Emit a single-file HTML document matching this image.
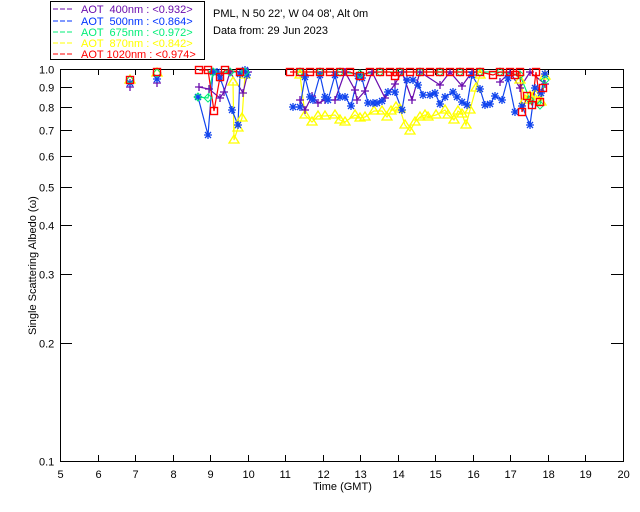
<!DOCTYPE html>
<html><head><meta charset="utf-8"><style>
html,body{margin:0;padding:0;background:#fff;width:640px;height:512px;overflow:hidden}
svg{display:block;font-family:"Liberation Sans",sans-serif;font-size:11px}
</style></head><body>
<svg id="s" width="640" height="512" viewBox="0 0 640 512">
<rect x="50.5" y="1.5" width="154" height="58" fill="#fff" stroke="#000"/>
<g font-size="11">
<line x1="53" y1="9" x2="74" y2="9" stroke="#6a0dad" stroke-dasharray="5,2"/><text x="81" y="13" fill="#6a0dad" xml:space="preserve">AOT  400nm : &lt;0.932&gt;</text>
<line x1="53" y1="21" x2="74" y2="21" stroke="#0033ff" stroke-dasharray="5,2"/><text x="81" y="25" fill="#0033ff" xml:space="preserve">AOT  500nm : &lt;0.864&gt;</text>
<line x1="53" y1="32" x2="74" y2="32" stroke="#00ee77" stroke-dasharray="5,2"/><text x="81" y="36" fill="#00ee77" xml:space="preserve">AOT  675nm : &lt;0.972&gt;</text>
<line x1="53" y1="43" x2="74" y2="43" stroke="#ffff00" stroke-dasharray="5,2"/><text x="81" y="47" fill="#ffff00" xml:space="preserve">AOT  870nm : &lt;0.842&gt;</text>
<line x1="53" y1="54" x2="74" y2="54" stroke="#ff0000" stroke-dasharray="5,2"/><text x="81" y="58" fill="#ff0000" xml:space="preserve">AOT 1020nm : &lt;0.974&gt;</text>
</g>
<text x="213" y="17">PML, N 50 22', W 04 08', Alt 0m</text>
<text x="213" y="34">Data from: 29 Jun 2023</text>
<g id="ax" stroke="#000" fill="none"></g>
<g id="dat"></g>
<g id="lab" font-size="11"></g>
<text x="313" y="490" font-size="11">Time (GMT)</text>
<text transform="translate(36,335) rotate(-90)" font-size="11">Single Scattering Albedo (ω)</text>
</svg>
<script>
var NS="http://www.w3.org/2000/svg";
function el(p,t,a,txt){var e=document.createElementNS(NS,t);for(var k in a)e.setAttribute(k,a[k]);if(txt!=null)e.textContent=txt;p.appendChild(e);return e;}
var ax=document.getElementById('ax'),lab=document.getElementById('lab'),dat=document.getElementById('dat');
var L=60,R=623,T=69,B=461;
el(ax,'rect',{x:L+.5,y:T+.5,width:R-L,height:B-T});
for(var h=5;h<=20;h++){var x=Math.round(L+(h-5)*(R-L)/15)+.5;
 if(h>5&&h<20){el(ax,'line',{x1:x,y1:B,x2:x,y2:B-6});el(ax,'line',{x1:x,y1:T,x2:x,y2:T+6});}
 el(lab,'text',{x:x-(h>=10?6:3),y:B+17},h);}
var vs=[0.1,0.2,0.3,0.4,0.5,0.6,0.7,0.8,0.9,1.0];
vs.forEach(function(v){var y=Math.round(B-(Math.log10(v)+1)*(B-T))+.5;
 if(v>0.1&&v<1){el(ax,'line',{x1:L,y1:y,x2:L+12,y2:y});el(ax,'line',{x1:R,y1:y,x2:R-12,y2:y});}
 el(lab,'text',{x:39,y:y+4},v.toFixed(1));});
function P(s){var a=s.trim().split(/\s+/).map(Number),r=[];for(var i=0;i<a.length;i+=2)r.push([a[i],a[i+1]]);return r;}
var blue=P("130 83 157 79 198 97 208 135 213 72 217 72 220 78 232 110 238 125 240 74 245 70 247 75 293 107 300 107 305 77 310 97 313 100 320 75 325 97 328 100 335 75 340 97 345 97 351 106 358 76 362 78 368 103 373 103 377 103 382 101 388 92 395 92 402 110 407 80 413 80 418 85 423 95 430 95 435 93 440 104 445 97 453 92 457 97 462 102 467 105 472 75 480 89 485 105 490 104 495 96 502 100 508 78 515 112 522 106 530 125 535 88 541 93 545 74");
var yel=P("130 80 157 73 233 82 234 140 238 128 242 118 245 75 300 75 305 115 312 122 318 116 325 116 335 115 340 120 345 122 355 115 360 118 365 117 374 111 382 111 387 117 391 111 396 107 400 109 405 125 410 131 415 122 420 117 425 115 428 117 436 115 445 110 448 115 454 120 458 111 462 114 466 125 470 110 476 88 480 75 520 80 525 100 530 96 535 94 541 102 545 76");
var pur=P("130 87 157 83 199 87 209 89 220 98 224 92 230 72 243 93 248 72 300 100 305 110 312 96 318 103 325 100 335 100 345 72 355 90 357 100 365 91 372 72 385 98 395 84 402 72 412 100 420 72 440 85 450 72 462 86 472 72 500 82 510 72 520 88 530 72 545 84");
var red=P("130 80 157 72 199 70 208 70 214 111 220 77 225 70 240 72 290 72 300 72 310 72 320 72 330 72 340 72 350 72 360 76 370 72 380 72 390 72 395 76 400 72 410 72 420 72 430 72 440 72 450 72 460 72 470 72 480 72 493 75 500 72 510 72 515 75 520 72 522 112 527 96 532 105 536 72 540 102 543 88");
var grn=P("130 80 157 73 198 97 208 98 213 72 230 72 245 72 300 72 320 72 340 72 360 74 380 72 400 72 420 72 440 72 460 72 480 72 500 72 520 75 530 100 540 105 545 80");
function line(d,c){var seg=[d[0]];for(var i=1;i<=d.length;i++){if(i==d.length||d[i][0]-d[i-1][0]>20){if(seg.length>1)el(dat,'polyline',{points:seg.map(function(p){return p.join(',')}).join(' '),fill:'none',stroke:c,'stroke-width':1.2});if(i<d.length)seg=[d[i]];}else seg.push(d[i]);}}
function mk(d,c,t){d.forEach(function(p){var x=p[0],y=p[1];
 if(t=='s')el(dat,'rect',{x:x-3.5,y:y-3.5,width:7,height:7,fill:'none',stroke:c,'stroke-width':1.4});
 else if(t=='d')el(dat,'path',{d:'M'+x+' '+(y-4)+'l4 4l-4 4l-4-4z',fill:'none',stroke:c});
 else if(t=='t')el(dat,'path',{d:'M'+x+' '+(y-5)+'l5 8h-10z',fill:'none',stroke:c,'stroke-width':1.3});
 else if(t=='p')el(dat,'path',{d:'M'+(x-4)+' '+y+'h8M'+x+' '+(y-4)+'v8',stroke:c,'stroke-width':1.3});
 else el(dat,'path',{d:'M'+(x-4)+' '+y+'h8M'+x+' '+(y-4)+'v8M'+(x-3)+' '+(y-3)+'l6 6M'+(x+3)+' '+(y-3)+'l-6 6',stroke:c,'stroke-width':1.3});});}
line(yel,'#ffff00');line(pur,'#6a0dad');line(blue,'#1144ee');line(grn,'#00ee77');line(red,'#ff0000');
mk(yel,'#ffff00','t');mk(pur,'#6a0dad','p');mk(blue,'#1144ee','a');mk(grn,'#00ee77','d');mk(red,'#ff0000','s');
</script>
</body></html>
